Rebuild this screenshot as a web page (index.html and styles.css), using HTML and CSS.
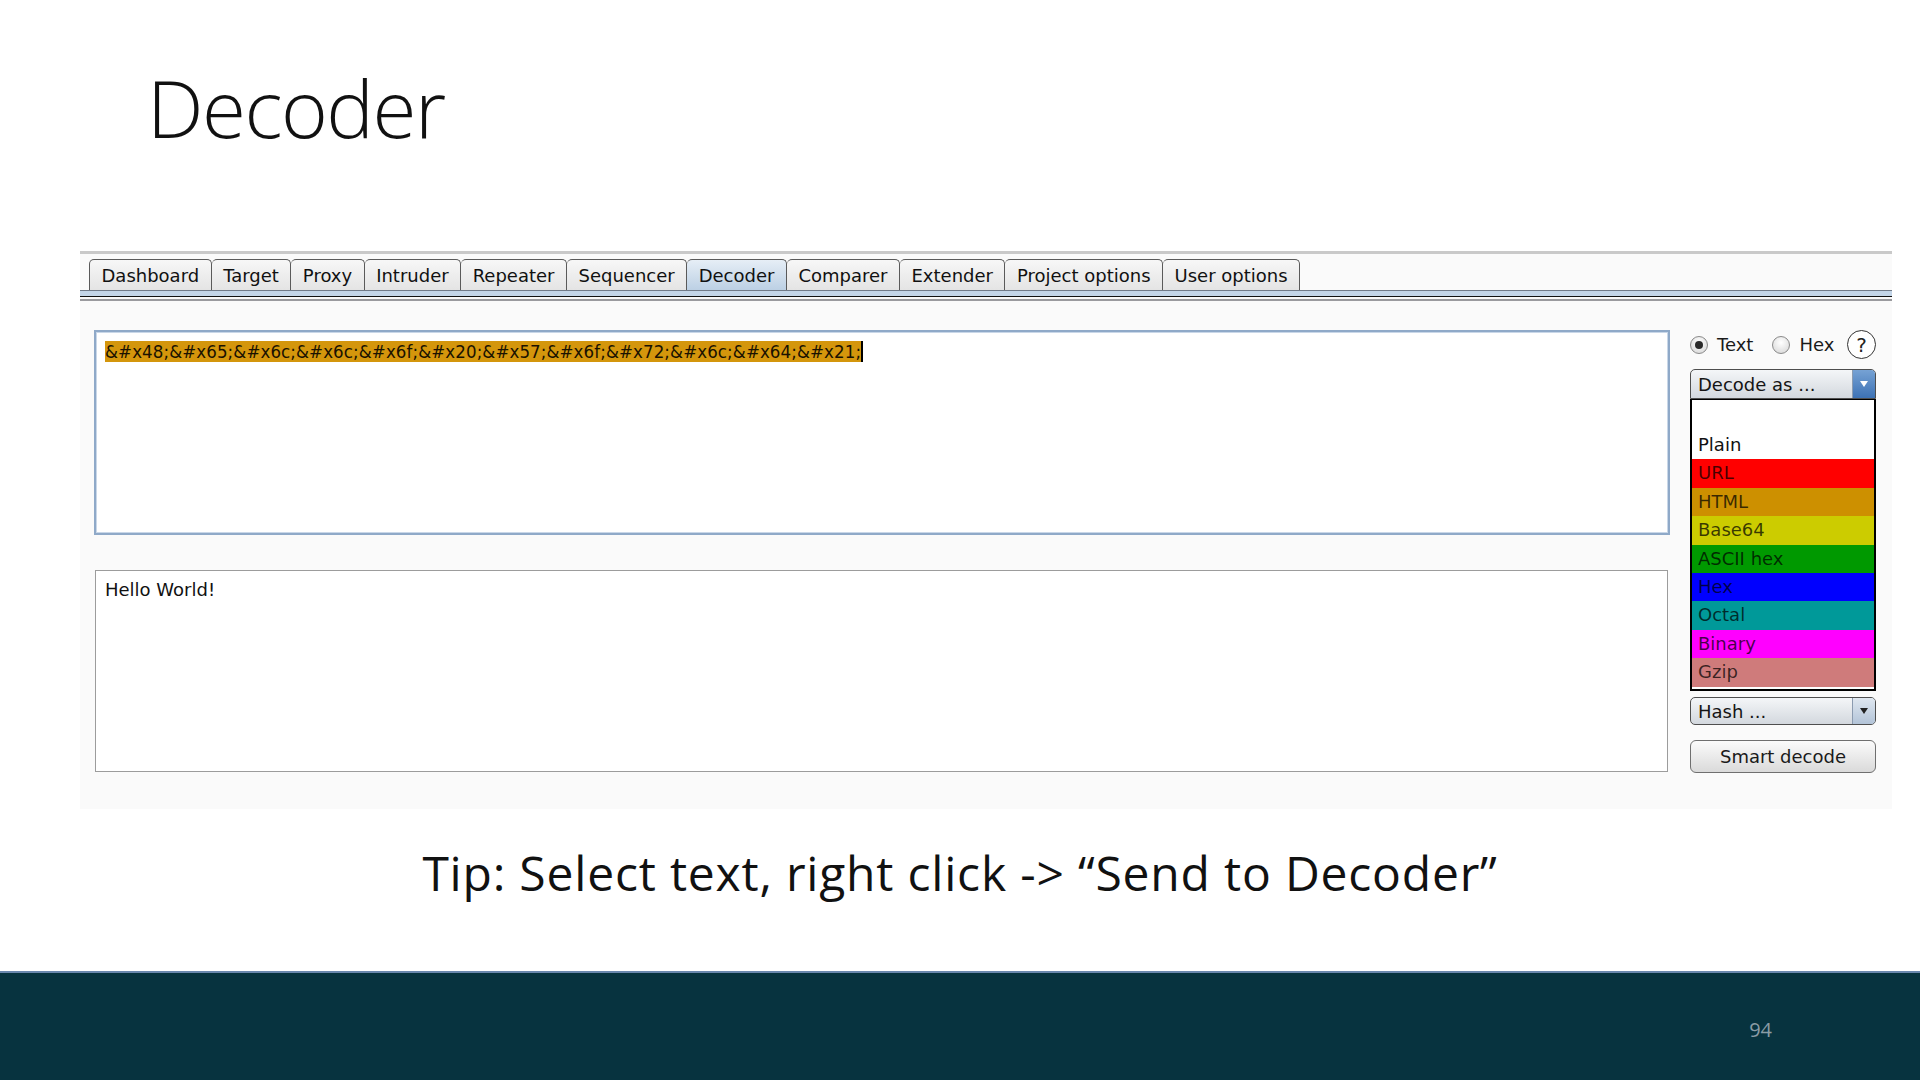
FILE: index.html
```html
<!DOCTYPE html>
<html>
<head>
<meta charset="utf-8">
<link rel="stylesheet" href="styles.css">
</head>
<body>
<div class="slide">
  <header class="title-area">
    <h1 class="title">Decoder</h1>
  </header>

  <section class="panel">
    <div class="tabs">
      <div class="tab">Dashboard</div>
      <div class="tab">Target</div>
      <div class="tab">Proxy</div>
      <div class="tab">Intruder</div>
      <div class="tab">Repeater</div>
      <div class="tab">Sequencer</div>
      <div class="tab tab-active">Decoder</div>
      <div class="tab">Comparer</div>
      <div class="tab">Extender</div>
      <div class="tab">Project options</div>
      <div class="tab">User options</div>
    </div>
    <div class="tab-rule"></div>

    <div class="workspace">
      <div class="editors">
        <div class="editor editor-input">
          <span class="selected-text">&amp;#x48;&amp;#x65;&amp;#x6c;&amp;#x6c;&amp;#x6f;&amp;#x20;&amp;#x57;&amp;#x6f;&amp;#x72;&amp;#x6c;&amp;#x64;&amp;#x21;</span><span class="caret"></span>
        </div>
        <div class="editor editor-output">Hello World!</div>
      </div>

      <aside class="controls">
        <div class="radio-row">
          <span class="radio radio-on"></span><span class="radio-label label-text">Text</span>
          <span class="radio"></span><span class="radio-label label-hex">Hex</span>
          <span class="help">?</span>
        </div>

        <div class="select select-open">
          <span class="select-label">Decode as ...</span>
          <span class="select-arrow arrow-blue"><svg width="10" height="8" viewBox="0 0 10 8"><path d="M1 1 L9 1 L5 7 Z" fill="#fff"/></svg></span>
        </div>
        <ul class="options">
          <li class="opt opt-blank"></li>
          <li class="opt opt-plain">Plain</li>
          <li class="opt opt-url">URL</li>
          <li class="opt opt-html">HTML</li>
          <li class="opt opt-b64">Base64</li>
          <li class="opt opt-ascii">ASCII hex</li>
          <li class="opt opt-hex">Hex</li>
          <li class="opt opt-octal">Octal</li>
          <li class="opt opt-binary">Binary</li>
          <li class="opt opt-gzip">Gzip</li>
        </ul>

        <div class="select select-hash">
          <span class="select-label">Hash ...</span>
          <span class="select-arrow arrow-grey"><svg width="10" height="8" viewBox="0 0 10 8"><path d="M1 1 L9 1 L5 7 Z" fill="#222"/></svg></span>
        </div>

        <div class="button">Smart decode</div>
      </aside>
    </div>
  </section>

  <div class="tip-area">
    <p class="tip">Tip: Select text, right click -&gt; “Send to Decoder”</p>
  </div>

  <footer class="footer">
    <span class="page-num">94</span>
  </footer>
</div>
</body>
</html>
```

FILE: styles.css
```css
* { box-sizing: border-box; }

html, body {
  margin: 0;
  padding: 0;
  background: #ffffff;
}

.slide {
  width: 1920px;
  height: 1080px;
  display: flex;
  flex-direction: column;
  overflow: hidden;
  background: #ffffff;
}

/* ---------- title ---------- */
.title-area {
  height: 251px;
  padding-left: 147px;
  padding-top: 52px;
}

.title {
  margin: 0;
  font-family: "Open Sans", "Noto Sans", sans-serif;
  font-weight: 300;
  font-size: 80px;
  line-height: 110px;
  letter-spacing: -1.5px;
  color: #111111;
}

/* ---------- burp panel ---------- */
.panel {
  margin-left: 80px;
  width: 1812px;
  height: 558px;
  background: #fafafa;
  border-top: 3px solid #c9c9c9;
  font-family: "DejaVu Sans", "Liberation Sans", sans-serif;
}

.tabs {
  display: flex;
  padding-left: 9px;
  margin-top: 5px;
  height: 31px;
  align-items: flex-end;
}

.tab {
  height: 31px;
  padding: 0 11.5px;
  display: flex;
  align-items: center;
  font-size: 18px;
  color: #111;
  border: 1px solid #5a5a5a;
  border-bottom: none;
  border-left: none;
  border-radius: 5px 5px 0 0;
  background: linear-gradient(#f7f7f7, #e4e4e4);
}

.tab:first-child {
  border-left: 1px solid #5a5a5a;
}

.tab-active {
  background: linear-gradient(#e6eef6, #bcd0e4);
}

.tab-rule {
  height: 11px;
  border-top: 1px solid #707a88;
  background:
    linear-gradient(#c3d5e8, #c3d5e8) 0 0 / 100% 5px no-repeat,
    linear-gradient(#111, #111) 0 5px / 100% 1px no-repeat,
    linear-gradient(#9a9a9e, #9a9a9e) 0 8px / 100% 2px no-repeat;
}

.workspace {
  display: flex;
  gap: 20px;
  padding: 29px 16px 0 14px;
}

.editors {
  width: 1576px;
  display: flex;
  flex-direction: column;
  gap: 35px;
}

.editor {
  background: #ffffff;
}

.editor-input {
  height: 205px;
  border: 2px solid #8fa9c8;
  box-shadow: inset 0 0 0 1px #c9d7e8;
  padding: 9px 9px;
  display: flex;
  align-items: flex-start;
}

.selected-text {
  background: #d4960c;
  color: #1a1200;
  font-family: "DejaVu Sans Condensed", "DejaVu Sans", sans-serif;
  font-stretch: condensed;
  font-size: 18.5px;
  line-height: 21px;
  letter-spacing: 0.1px;
}

.caret {
  width: 2px;
  height: 21px;
  background: #000;
}

.editor-output {
  margin-left: 1px;
  width: 1573px;
  height: 202px;
  border: 1px solid #9c9c9c;
  padding: 8px 9px;
  font-size: 18px;
  color: #111;
}

/* ---------- right controls ---------- */
.controls {
  width: 186px;
  flex-shrink: 0;
  display: flex;
  flex-direction: column;
}

.radio-row {
  height: 29px;
  display: flex;
  align-items: center;
  font-size: 18px;
  color: #1a1a1a;
}

.radio {
  flex-shrink: 0;
  width: 18px;
  height: 18px;
  border-radius: 50%;
  border: 1px solid #8a8a8a;
  background: radial-gradient(circle at 50% 35%, #ffffff, #d4d4d4);
  position: relative;
  margin-right: 9px;
}

.radio-on::after {
  content: "";
  position: absolute;
  left: 4px;
  top: 4px;
  width: 8px;
  height: 8px;
  border-radius: 50%;
  background: #2a2a2a;
}

.label-text {
  margin-right: 19px;
}

.label-hex {
  margin-right: auto;
}

.help {
  flex-shrink: 0;
  width: 29px;
  height: 29px;
  border-radius: 50%;
  border: 1.5px solid #333;
  display: flex;
  align-items: center;
  justify-content: center;
  font-size: 20px;
  color: #222;
  background: #fff;
}

.select {
  height: 28px;
  border: 1px solid #4e4e4e;
  border-radius: 5px;
  display: flex;
  align-items: center;
  background: linear-gradient(#f4f6f8, #d3d8de);
  overflow: hidden;
  font-size: 18px;
  color: #151515;
}

.select-open {
  height: 30px;
  margin-top: 10px;
  border-radius: 5px 5px 0 0;
}

.select-label {
  flex: 1;
  padding-left: 7px;
}

.select-arrow {
  width: 23px;
  height: 100%;
  display: flex;
  align-items: center;
  justify-content: center;
  border-left: 1px solid #8b9bb0;
}

.arrow-blue {
  background: linear-gradient(#76a2d4, #3d72b5);
}

.arrow-grey {
  background: linear-gradient(#dfe7f0, #b3c4d8);
}

.options {
  list-style: none;
  margin: 0;
  padding: 0;
  height: 292px;
  border: 2px solid #000;
  border-top: 1px solid #000;
  background: #ffffff;
  font-size: 18px;
}

.opt {
  height: 28.4px;
  line-height: 28px;
  padding-left: 6px;
  color: rgba(0, 0, 0, 0.72);
}

.opt-blank { height: 31px; }
.opt-plain { color: #111; }
.opt-url { background: #ff0000; }
.opt-html { background: #cd9000; }
.opt-b64 { background: #cccc00; }
.opt-ascii { background: #009900; }
.opt-hex { background: #0000ff; }
.opt-octal { background: #009999; }
.opt-binary { background: #ff00ff; }
.opt-gzip { background: #cf7b7b; }

.select-hash {
  margin-top: 6px;
}

.button {
  margin-top: 15px;
  height: 33px;
  border: 1px solid #6f6f6f;
  border-radius: 6px;
  background: linear-gradient(#fbfbfb, #dadada);
  display: flex;
  align-items: center;
  justify-content: center;
  font-size: 18px;
  color: #1a1a1a;
}

/* ---------- tip ---------- */
.tip-area {
  height: 162px;
  display: flex;
  justify-content: center;
  padding-top: 34px;
}

.tip {
  margin: 0;
  font-family: "Open Sans", "Noto Sans", sans-serif;
  font-size: 48px;
  line-height: 60px;
  color: #111111;
  letter-spacing: 0.8px;
}

/* ---------- footer ---------- */
.footer {
  height: 109px;
  background: #07333f;
  border-top: 2px solid #6a88ae;
  display: flex;
  justify-content: flex-end;
  padding-right: 148px;
  padding-top: 44px;
}

.page-num {
  font-family: "Open Sans", "Noto Sans", sans-serif;
  font-size: 20px;
  line-height: 26px;
  color: #8a9ca5;
}
```
